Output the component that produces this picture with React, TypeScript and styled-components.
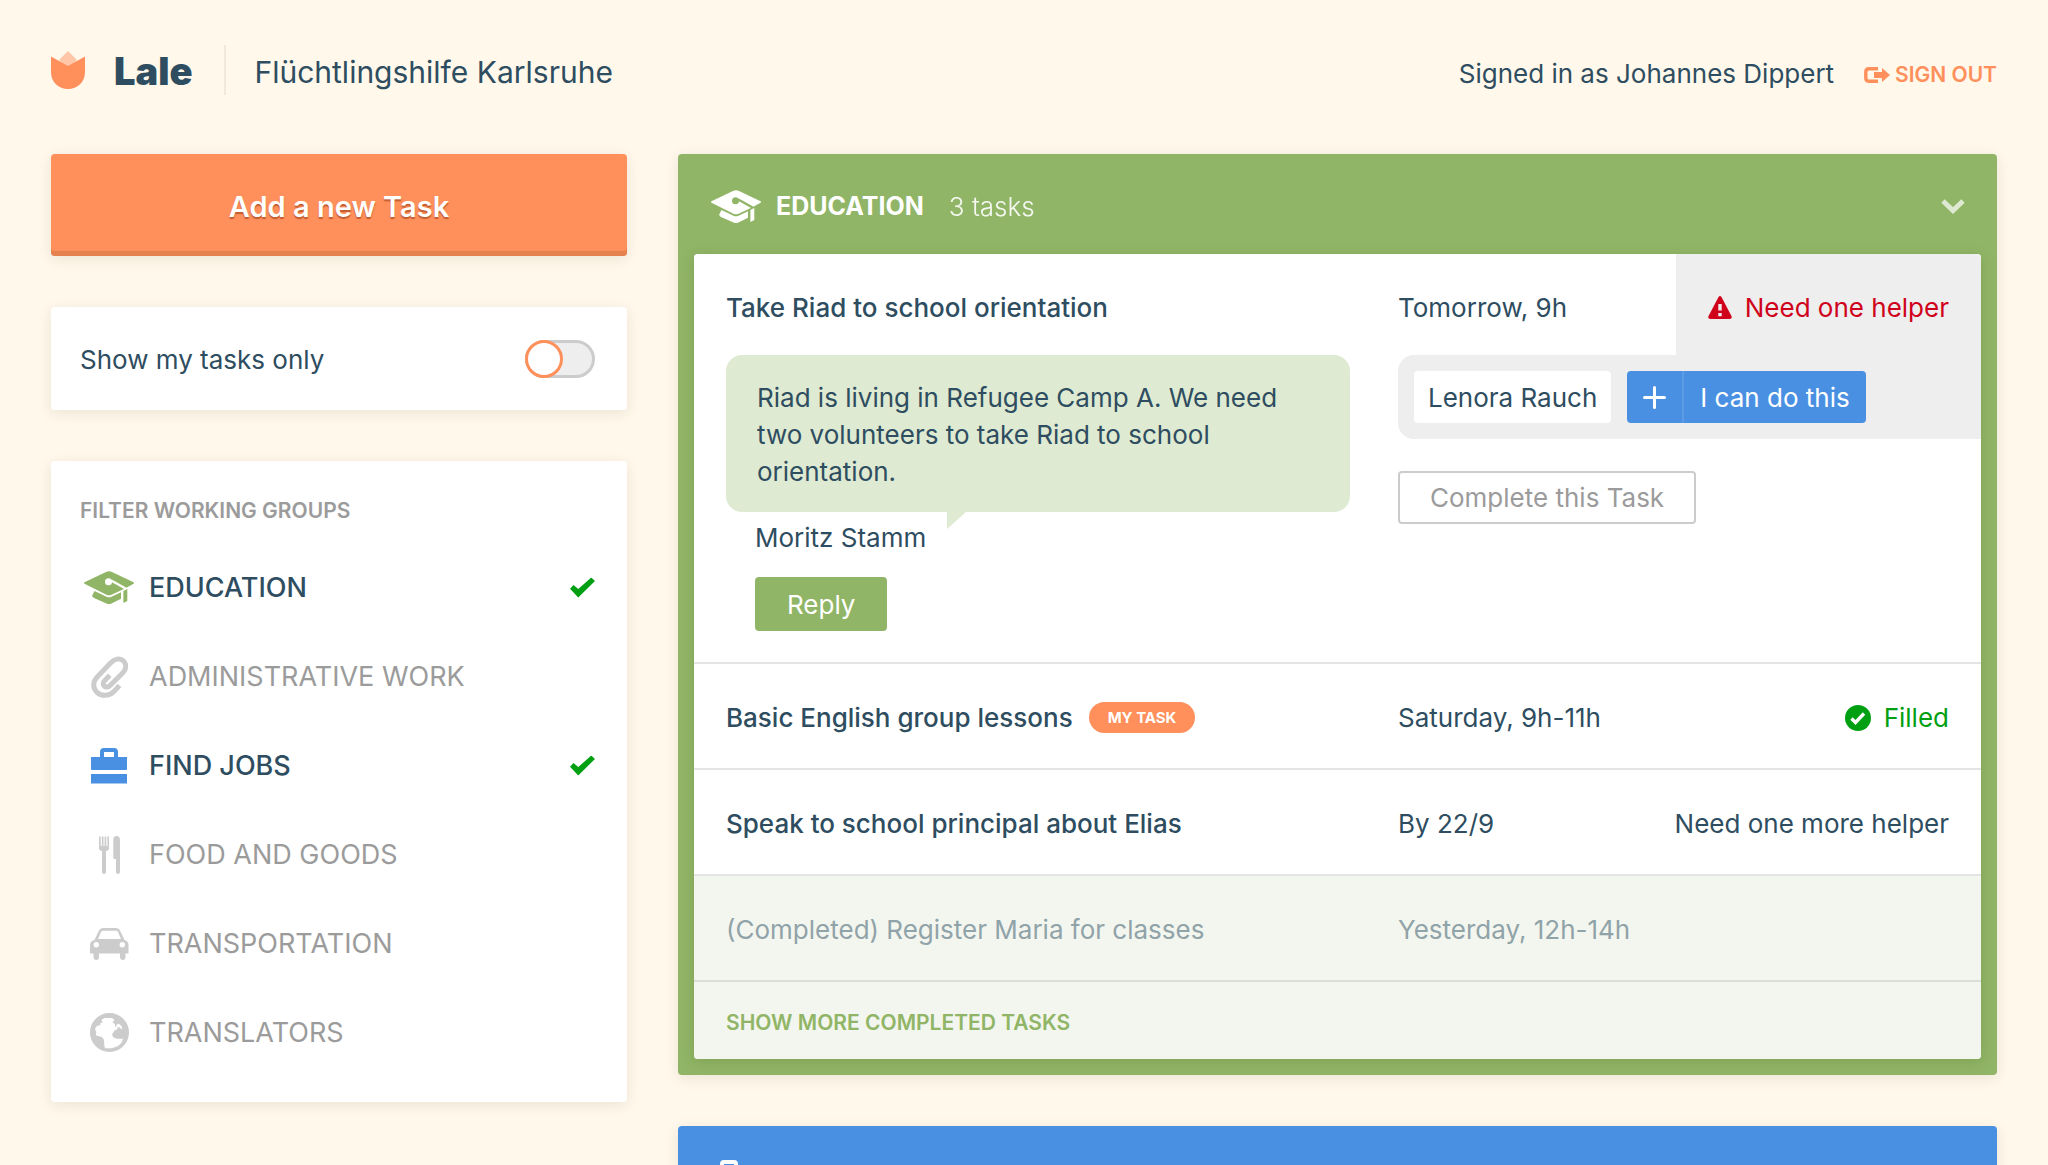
import React, { useId, useState } from 'react';
import styled, { createGlobalStyle, ThemeProvider } from 'styled-components';

const theme = {
  cream: '#fff8eb',
  ink: '#2e4d60',
  orange: '#ff8f5b',
  orangeDark: '#e5804f',
  green: '#91b566',
  bubble: '#deead2',
  blue: '#4a90e2',
  red: '#d0021b',
  ok: '#00a012',
  grey: '#9b9b9b',
  iconGrey: '#cccccc',
  panelGrey: '#eeeeee',
  line: '#e4e4e4',
  doneBg: '#f3f6ef',
  doneText: '#90a3a8',
  shadow: '0 3px 14px rgba(70, 50, 10, 0.1)',
};

const GlobalStyle = createGlobalStyle`
  *, *::before, *::after { box-sizing: border-box; }
  body {
    margin: 0;
    background: ${theme.cream};
    color: ${theme.ink};
    font-family: Inter, "Noto Sans", sans-serif;
    font-size: 26px;
    line-height: 31px;
  }
  button, input { font: inherit; color: inherit; }
  h1, h2, h3, p, ul { margin: 0; padding: 0; font: inherit; }
  ul { list-style: none; }
  svg { display: block; flex: none; }
`;

const Page = styled.div`
  padding: 45px 51px 0;
`;

const Header = styled.header`
  display: flex;
  justify-content: space-between;
  align-items: center;
  min-height: 50px;
  margin-bottom: 59px;
`;

const Brand = styled.div`
  display: flex;
  align-items: center;
`;

const BrandName = styled.h1`
  margin-left: 29px;
  padding: 2px 32px 0 0;
  border-right: 2px solid #f1e9dd;
  font-size: 38px;
  font-weight: 900;
  line-height: 48px;
`;

const Organisation = styled.span`
  padding: 4px 0 0 28px;
  font-size: 30px;
`;

const Account = styled.div`
  display: flex;
  align-items: baseline;
  gap: 30px;
  padding-top: 8px;
`;

const SignOut = styled.a`
  display: flex;
  align-items: center;
  gap: 5px;
  color: ${(p) => p.theme.orange};
  font-size: 21px;
  font-weight: 600;
  text-decoration: none;
  text-transform: uppercase;
`;

const Columns = styled.div`
  display: grid;
  grid-template-columns: 576fr 1319fr;
  gap: 51px;
  align-items: start;
`;

const Sidebar = styled.aside`
  display: grid;
  gap: 51px;
`;

const Main = styled.main`
  display: grid;
  gap: 51px;
  min-width: 0;
`;

const AddButton = styled.button`
  padding: 38px 16px 34px;
  border: 0;
  border-radius: 4px;
  background: ${(p) => p.theme.orange};
  box-shadow: inset 0 -5px ${(p) => p.theme.orangeDark}, ${(p) => p.theme.shadow};
  color: #fff;
  font-size: 29px;
  font-weight: 600;
  line-height: 30px;
  text-shadow: 0 2px 1px rgba(150, 60, 20, 0.6);
  cursor: pointer;
`;

const Card = styled.section`
  padding: 0 32px 0 29px;
  border-radius: 4px;
  background: #fff;
  box-shadow: ${(p) => p.theme.shadow};
`;

const ToggleRow = styled.label`
  display: flex;
  align-items: center;
  justify-content: space-between;
  padding: 33px 0 32px;
  cursor: pointer;
`;

const Switch = styled.input`
  appearance: none;
  width: 70px;
  height: 38px;
  margin: 0;
  border: 3px solid ${(p) => p.theme.iconGrey};
  border-radius: 19px;
  background: ${(p) => p.theme.panelGrey};
  cursor: pointer;

  &::before {
    content: '';
    display: block;
    width: 38px;
    height: 38px;
    margin: -3px;
    border: 3px solid ${(p) => p.theme.orange};
    border-radius: 50%;
    background: #fff;
  }
  &:checked::before {
    margin-left: 29px;
  }
`;

const FilterCard = styled(Card)`
  padding-top: 37px;
  padding-bottom: 25px;
`;

const FilterHeading = styled.h2`
  margin: 0 0 19px;
  color: ${(p) => p.theme.grey};
  font-size: 21px;
  font-weight: 600;
  line-height: 26px;
  text-transform: uppercase;
`;

const FilterRow = styled.label<{ $on: boolean }>`
  display: flex;
  align-items: center;
  gap: 11px;
  height: 89px;
  color: ${(p) => (p.$on ? p.theme.ink : p.theme.grey)};
  font-size: 27px;
  font-weight: ${(p) => (p.$on ? 500 : 400)};
  text-transform: uppercase;
  cursor: pointer;
`;

const FilterIcon = styled.span<{ $color: string }>`
  display: flex;
  justify-content: center;
  width: 58px;
  color: ${(p) => p.$color};
`;

const FilterCheck = styled.input`
  appearance: none;
  width: 25px;
  height: 20px;
  margin: 0 0 0 auto;
  clip-path: polygon(0 56%, 14% 38%, 33% 58%, 85% 0, 100% 17%, 33% 100%);
  cursor: pointer;

  &:checked {
    background: ${(p) => p.theme.ok};
  }
`;

const Panel = styled.section<{ $color: string }>`
  padding: 0 16px 16px;
  border-radius: 4px;
  background: ${(p) => p.$color};
  box-shadow: ${(p) => p.theme.shadow};
`;

const PanelHeader = styled.button`
  display: flex;
  align-items: center;
  width: 100%;
  height: 100px;
  padding: 4px 16px 0 17px;
  border: 0;
  background: none;
  color: #fff;
  cursor: pointer;
`;

const PanelTitle = styled.span`
  margin: 0 25px 0 15px;
  font-size: 25px;
  font-weight: 700;
  text-transform: uppercase;
`;

const PanelCount = styled.span`
  margin-right: auto;
  font-weight: 300;
  opacity: 0.9;
`;

const TaskList = styled.ul`
  overflow: hidden;
  border-radius: 4px;
  background: #fff;
  box-shadow: 0 3px 14px rgba(40, 60, 10, 0.16);
`;

const Task = styled.li<{ $done?: boolean }>`
  display: grid;
  grid-template-columns: 624fr 583fr;
  gap: 48px;
  padding-left: 32px;
  border-bottom: 2px solid ${(p) => (p.$done ? '#dadeda' : p.theme.line)};
  background: ${(p) => (p.$done ? p.theme.doneBg : '#fff')};
  color: ${(p) => (p.$done ? p.theme.doneText : p.theme.ink)};
`;

const TaskTitle = styled.h3<{ $plain?: boolean }>`
  display: flex;
  align-items: center;
  gap: 16px;
  padding: 38px 0 35px;
  font-weight: ${(p) => (p.$plain ? 400 : 500)};
`;

const OpenTitle = styled(TaskTitle)`
  padding-bottom: 32px;
`;

const MyTask = styled.span`
  padding: 0 19px;
  border-radius: 16px;
  background: ${(p) => p.theme.orange};
  color: #fff;
  font-size: 15px;
  font-weight: 700;
  text-transform: uppercase;
`;

const TaskInfo = styled.div`
  display: flex;
  justify-content: space-between;
`;

const Time = styled.span`
  padding-top: 38px;
`;

const Status = styled.span<{ $tone?: 'red' | 'ok' | 'ink'; $tab?: boolean }>`
  display: flex;
  align-items: center;
  align-self: flex-start;
  gap: 13px;
  padding: 38px 32px 32px;
  background: ${(p) => (p.$tab ? p.theme.panelGrey : 'transparent')};
  color: ${(p) => p.theme[p.$tone || 'ink']};
`;

const Bubble = styled.p`
  position: relative;
  padding: 24px 31px 22px;
  border-radius: 16px;
  background: ${(p) => p.theme.bubble};
  line-height: 37px;

  &::after {
    content: '';
    position: absolute;
    top: 100%;
    left: 221px;
    width: 19px;
    height: 17px;
    background: inherit;
    clip-path: polygon(0 0, 100% 0, 0 100%);
  }
`;

const Author = styled.div`
  display: grid;
  justify-items: start;
  gap: 24px;
  padding: 10px 0 31px 29px;
`;

const ReplyButton = styled.button`
  height: 54px;
  padding: 0 32px;
  border: 0;
  border-radius: 4px;
  background: ${(p) => p.theme.green};
  color: #fff;
  cursor: pointer;
`;

const Helpers = styled.div`
  display: flex;
  gap: 16px;
  padding: 16px;
  border-radius: 16px 0 0 16px;
  background: ${(p) => p.theme.panelGrey};
`;

const Helper = styled.span`
  padding: 11px 14px 10px;
  border-radius: 4px;
  background: #fff;
`;

const JoinButton = styled.button`
  display: flex;
  align-items: stretch;
  padding: 0;
  border: 0;
  border-radius: 4px;
  background: ${(p) => p.theme.blue};
  color: #fff;
  cursor: pointer;
`;

const JoinIcon = styled.span`
  display: flex;
  align-items: center;
  padding: 0 16px;
  border-right: 2px solid #5c9be5;
`;

const JoinText = styled.span`
  padding: 11px 16px 10px;
`;

const CompleteButton = styled.button`
  height: 53px;
  margin-top: 32px;
  padding: 0 30px;
  border: 2px solid ${(p) => p.theme.iconGrey};
  border-radius: 4px;
  background: #fff;
  color: ${(p) => p.theme.grey};
  cursor: pointer;
`;

const More = styled.li`
  padding: 25px 32px 21px;
  background: ${(p) => p.theme.doneBg};
`;

const MoreLink = styled.a`
  display: block;
  color: ${(p) => p.theme.green};
  font-size: 21px;
  font-weight: 600;
  text-decoration: none;
  text-transform: uppercase;
`;

const Tulip = () => (
  <svg width="34" height="38" viewBox="0 0 34 38" aria-hidden="true">
    <path d="M8 9 17 0l9 9-9 9z" fill="#ffc6a8" />
    <path d="M0 5.5 17 15 34 5.5V21c0 10-7.5 17-17 17S0 31 0 21z" fill="#ff8f5b" />
  </svg>
);

const SignOutIcon = () => (
  <svg width="26" height="16" viewBox="0 0 26 16" fill="none" aria-hidden="true">
    <path d="M14 1.8H5Q1.8 1.8 1.8 5v6q0 3.200 3.200 3.200h9" stroke="currentColor" strokeWidth="3.400" />
    <path d="M10 5h8V1l8 7-8 7v-4h-8z" fill="currentColor" />
  </svg>
);

const CapIcon = () => {
  const id = useId();
  return (
    <svg width="50" height="33" viewBox="0 0 50 33" fill="currentColor" aria-hidden="true">
      <mask id={id}>
        <path fill="#fff" d="M0 0h50v33H0z" />
        <circle cx="24.500" cy="10.700" r="3.500" fill="#000" />
        <path d="M24.500 9.800q3-.2 5 1L42 17.800" stroke="#000" strokeWidth="2.400" fill="none" />
      </mask>
      <path
        mask={`url(#${id})`}
        d="M.5 11.200 22.500.7q2.500-1 5 0l22 10.500q1 .7 0 1.500L42 17l-14.500 6.700q-2.500 1-5 0L.5 12.800q-.9-.9 0-1.600z"
      />
      <path d="m10.500 20 12 5.700q2.500 1 5 0L37 21.300v6.500l-9.500 4.600q-2.500 1-5 0L10 27q-2-1-1.700-2.800z" />
      <path d="m39.400 20 3.900-2v12l-3.900 1.900z" />
    </svg>
  );
};

const ClipIcon = () => (
  <svg width="37" height="42" viewBox="0 0 37 42" fill="none" stroke="currentColor" strokeWidth="5" aria-hidden="true">
    <path d="M28.500 29.500 23 35.500c-5 5-12.500 5-17 .8-4.500-4.500-4.200-10.800.2-15.300L19.500 7c4-4.300 9.700-5.300 13-2 3.700 3.800 2.700 8.500-1.300 12.500L19 29.500c-2 2-4.500 2-5.800.5-1.400-1.500-1.200-3.700.6-5.500l5-5.300" />
  </svg>
);

const CaseIcon = () => (
  <svg width="36" height="36" viewBox="0 0 36 36" fill="currentColor" aria-hidden="true">
    <path d="M9 10V4q0-4 4-4h10q4 0 4 4v6h-4V4H13v6z" />
    <path d="M0 9h36v12q0 1-1 1H1q-1 0-1-1zM0 26h36v9.500H0z" />
  </svg>
);

const ForkIcon = () => (
  <svg width="21" height="38" viewBox="0 0 21 38" fill="currentColor" aria-hidden="true">
    <path d="M0 .5h1.700V10h1.100V.5h1.700V10h1.100V.5h1.700V10h1.100V.5H10V12q0 2.500-3 3v21q0 2-2 2t-2-2V15q-3-.5-3-3z" />
    <path d="M14.300 4q0-4 3.300-4T21 4v32q0 2-2 2t-2-2V23h-1.700q-1 0-1-1z" />
  </svg>
);

const CarIcon = () => (
  <svg width="39" height="32" viewBox="0 0 39 32" fill="currentColor" fillRule="evenodd" aria-hidden="true">
    <path d="M4.500 12 9 2.500Q10.200 0 13 0h13q2.800 0 4 2.500L34.500 12q4 1.200 4 5v8.500H35.500V29q0 3-2.700 3T30 29v-3.500H9V29q0 3-2.700 3t-2.800-3v-3.500H0V17q0-3.800 4.500-5zM8 11h23l-3-7q-.5-1.200-2-1.200H13q-1.500 0-2 1.200zm-1.700 3a2.700 2.700 0 1 0 0 5.400 2.700 2.700 0 1 0 0-5.400zm26 0a2.700 2.700 0 1 0 0 5.400 2.700 2.700 0 1 0 0-5.400z" />
  </svg>
);

const GlobeIcon = () => (
  <svg width="39" height="39" viewBox="0 0 39 39" fill="currentColor" fillRule="evenodd" aria-hidden="true">
    <path d="M19.500 0a19.500 19.500 0 1 0 0 39 19.500 19.500 0 1 0 0-39zM11.500 6.500 15 5h7l2.500 2-2 2.500 2.500 1.500v2.500l2 .5.500 2-3.500 2-2 3.500 1.500 3 3.500 1.200h6l-1.500 4-3.500 3.300-6 2.200H15l-.7-3L14 27l-2-3-3.200-.8-3-1 .5-3-1.300-3.500L7 13l3.500-1-.5-1.500 2.500-1zM26 12.500l2.500-2 2.500 2 1.500 3-1.500.5-1.700-2-1.800.8z" />
  </svg>
);

const ChevronIcon = () => (
  <svg width="24" height="15" viewBox="0 0 24 15" fill="none" stroke="#fff" strokeWidth="5" opacity="0.7" aria-hidden="true">
    <path d="m2 2 10 9.500L22 2" />
  </svg>
);

const WarningIcon = () => (
  <svg width="24" height="23" viewBox="0 0 24 23" fill="currentColor" fillRule="evenodd" aria-hidden="true">
    <path d="M10.500 1q1.500-2 3 0L23.700 20.500q.5 2.500-2 2.500H2.300q-2.500 0-2-2.500zM10.300 8v6.500h3.400V8zm0 9v3.200h3.400V17z" />
  </svg>
);

const FilledIcon = () => (
  <svg width="26" height="26" viewBox="0 0 26 26" aria-hidden="true">
    <circle cx="13" cy="13" r="13" fill="currentColor" />
    <path d="m6.500 13.500 4 4 8.500-9" fill="none" stroke="#fff" strokeWidth="3.400" />
  </svg>
);

const PlusIcon = () => (
  <svg width="23" height="23" viewBox="0 0 23 23" stroke="currentColor" strokeWidth="3" strokeLinecap="round" aria-hidden="true">
    <path d="M11.500 1.500v20M1.500 11.500h20" />
  </svg>
);

const groups = [
  { name: 'Education', icon: CapIcon, color: theme.green },
  { name: 'Administrative work', icon: ClipIcon, color: theme.ink },
  { name: 'Find jobs', icon: CaseIcon, color: theme.blue },
  { name: 'Food and goods', icon: ForkIcon, color: theme.ink },
  { name: 'Transportation', icon: CarIcon, color: theme.ink },
  { name: 'Translators', icon: GlobeIcon, color: theme.ink },
];

function Filters() {
  const [active, setActive] = useState(['Education', 'Find jobs']);
  const toggle = (name: string) =>
    setActive((list) => (list.includes(name) ? list.filter((n) => n !== name) : [...list, name]));

  return (
    <FilterCard>
      <FilterHeading>Filter working groups</FilterHeading>
      {groups.map(({ name, icon: Icon, color }) => {
        const on = active.includes(name);
        return (
          <FilterRow key={name} $on={on}>
            <FilterIcon $color={on ? color : theme.iconGrey}>
              <Icon />
            </FilterIcon>
            {name}
            <FilterCheck type="checkbox" checked={on} onChange={() => toggle(name)} />
          </FilterRow>
        );
      })}
    </FilterCard>
  );
}

export default function App() {
  return (
    <ThemeProvider theme={theme}>
      <GlobalStyle />
      <Page>
        <Header>
          <Brand>
            <Tulip />
            <BrandName>Lale</BrandName>
            <Organisation>Flüchtlingshilfe Karlsruhe</Organisation>
          </Brand>
          <Account>
            <span>Signed in as Johannes Dippert</span>
            <SignOut href="#sign-out">
              <SignOutIcon />
              Sign out
            </SignOut>
          </Account>
        </Header>

        <Columns>
          <Sidebar>
            <AddButton type="button">Add a new Task</AddButton>
            <Card>
              <ToggleRow>
                Show my tasks only
                <Switch type="checkbox" />
              </ToggleRow>
            </Card>
            <Filters />
          </Sidebar>

          <Main>
            <Panel $color={theme.green}>
              <PanelHeader type="button" aria-expanded="true">
                <CapIcon />
                <PanelTitle>Education</PanelTitle>
                <PanelCount>3 tasks</PanelCount>
                <ChevronIcon />
              </PanelHeader>
              <TaskList>
                <Task>
                  <div>
                    <OpenTitle>Take Riad to school orientation</OpenTitle>
                    <Bubble>
                      Riad is living in Refugee Camp A. We need two volunteers to take Riad to school orientation.
                    </Bubble>
                    <Author>
                      <span>Moritz Stamm</span>
                      <ReplyButton type="button">Reply</ReplyButton>
                    </Author>
                  </div>
                  <div>
                    <TaskInfo>
                      <Time>Tomorrow, 9h</Time>
                      <Status $tone="red" $tab>
                        <WarningIcon />
                        Need one helper
                      </Status>
                    </TaskInfo>
                    <Helpers>
                      <Helper>Lenora Rauch</Helper>
                      <JoinButton type="button">
                        <JoinIcon>
                          <PlusIcon />
                        </JoinIcon>
                        <JoinText>I can do this</JoinText>
                      </JoinButton>
                    </Helpers>
                    <CompleteButton type="button">Complete this Task</CompleteButton>
                  </div>
                </Task>
                <Task>
                  <TaskTitle>
                    Basic English group lessons
                    <MyTask>My task</MyTask>
                  </TaskTitle>
                  <TaskInfo>
                    <Time>Saturday, 9h-11h</Time>
                    <Status $tone="ok">
                      <FilledIcon />
                      Filled
                    </Status>
                  </TaskInfo>
                </Task>
                <Task>
                  <TaskTitle>Speak to school principal about Elias</TaskTitle>
                  <TaskInfo>
                    <Time>By 22/9</Time>
                    <Status>Need one more helper</Status>
                  </TaskInfo>
                </Task>
                <Task $done>
                  <TaskTitle $plain>(Completed) Register Maria for classes</TaskTitle>
                  <TaskInfo>
                    <Time>Yesterday, 12h-14h</Time>
                  </TaskInfo>
                </Task>
                <More>
                  <MoreLink href="#completed">Show more completed tasks</MoreLink>
                </More>
              </TaskList>
            </Panel>

            <Panel $color={theme.blue}>
              <PanelHeader type="button" aria-expanded="false" aria-label="Find jobs">
                <CaseIcon />
              </PanelHeader>
            </Panel>
          </Main>
        </Columns>
      </Page>
    </ThemeProvider>
  );
}
